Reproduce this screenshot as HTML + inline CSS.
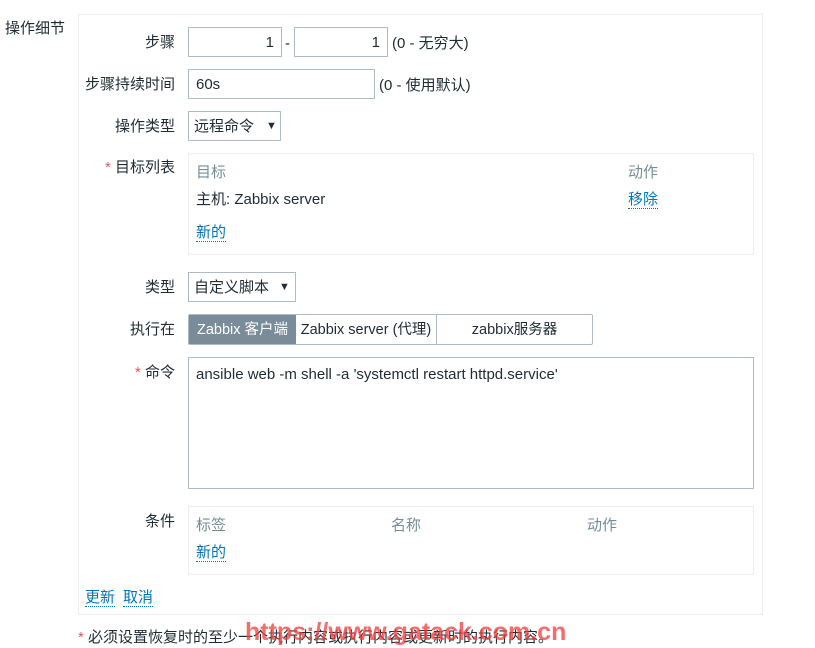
<!DOCTYPE html><html><head><meta charset="utf-8"><style>
*{box-sizing:border-box}
body{margin:0;width:815px;height:648px;background:#fff;font-family:"Liberation Sans","Noto Sans CJK SC",sans-serif;font-size:15px;color:#1f2c33;position:relative;overflow:hidden}
.a{position:absolute;white-space:nowrap;line-height:18px}
.lbl{position:absolute;right:640px;white-space:nowrap;line-height:18px}
.in{position:absolute;border:1px solid #acbbc4;background:#fff;height:30px;line-height:30px;padding:0 7px;white-space:nowrap}
.box{position:absolute;border:1px solid #ebeef0}
.g{color:#768d99}
.lk{color:#0275b8;border-bottom:1px dotted #0275b8;line-height:17px}
.r{color:#e45959}
.ar{position:absolute;font-size:11px;line-height:28px;top:0}
</style></head><body>
<div class="box" style="left:78px;top:14px;width:685px;height:601px"></div>
<div class="a" style="left:5px;top:20px">操作细节</div>
<div class="lbl" style="top:34px">步骤</div>
<div class="in" style="left:188px;top:27px;width:94px;text-align:right">1</div>
<div class="a" style="left:285px;top:35px">-</div>
<div class="in" style="left:294px;top:27px;width:94px;text-align:right">1</div>
<div class="a" style="left:392px;top:35px">(0 - 无穷大)</div>
<div class="lbl" style="top:76px">步骤持续时间</div>
<div class="in" style="left:188px;top:69px;width:187px">60s</div>
<div class="a" style="left:379px;top:77px">(0 - 使用默认)</div>
<div class="lbl" style="top:118px">操作类型</div>
<div class="in" style="left:188px;top:111px;width:93px;padding-left:5px">远程命令<span class="ar" style="left:77px">▼</span></div>
<div class="lbl" style="top:159px"><span class="r">*</span> 目标列表</div>
<div class="box" style="left:188px;top:153px;width:566px;height:102px"></div>
<div class="a g" style="left:196px;top:164px">目标</div>
<div class="a g" style="left:628px;top:164px">动作</div>
<div class="a" style="left:196px;top:191px">主机: Zabbix server</div>
<div class="a lk" style="left:628px;top:191px">移除</div>
<div class="a lk" style="left:196px;top:224px">新的</div>
<div class="lbl" style="top:279px">类型</div>
<div class="in" style="left:188px;top:272px;width:108px;padding-left:5px">自定义脚本<span class="ar" style="left:90px">▼</span></div>
<div class="lbl" style="top:321px">执行在</div>
<div style="position:absolute;left:188px;top:314px;width:405px;height:31px;border:1px solid #acbbc4;border-radius:2px;line-height:30px;white-space:nowrap;font-size:14.5px">
<div style="position:absolute;left:0;top:0;width:107px;height:29px;background:#7a8c99;color:#fff;text-align:center">Zabbix 客户端</div>
<div style="position:absolute;left:107px;top:0;width:141px;height:29px;text-align:center;border-right:1px solid #acbbc4">Zabbix server (代理)</div>
<div style="position:absolute;left:248px;top:0;width:155px;text-align:center">zabbix服务器</div></div>
<div class="lbl" style="top:364px"><span class="r">*</span> 命令</div>
<div class="in" style="left:188px;top:357px;width:566px;height:132px;line-height:18px;padding-top:8px">ansible web -m shell -a 'systemctl restart httpd.service'</div>
<div class="lbl" style="top:513px">条件</div>
<div class="box" style="left:188px;top:506px;width:566px;height:69px"></div>
<div class="a g" style="left:196px;top:517px">标签</div>
<div class="a g" style="left:391px;top:517px">名称</div>
<div class="a g" style="left:587px;top:517px">动作</div>
<div class="a lk" style="left:196px;top:544px">新的</div>
<div class="a lk" style="left:85px;top:589px">更新</div>
<div class="a lk" style="left:123px;top:589px">取消</div>
<div class="a" style="left:78px;top:629px"><span class="r">*</span> 必须设置恢复时的至少一个执行内容或执行内容或更新时的执行内容。</div>
<div class="a" style="left:245px;top:619px;font-size:25px;font-weight:bold;color:rgba(240,60,60,0.75);line-height:26px">https://www.gatack.com.cn</div>
</body></html>
